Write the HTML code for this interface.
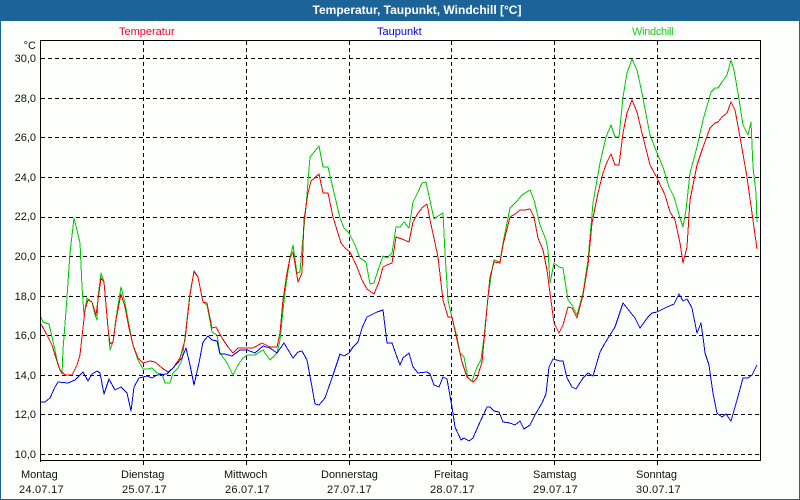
<!DOCTYPE html>
<html>
<head>
<meta charset="utf-8">
<style>
html,body{margin:0;padding:0;background:#fff}
#w{position:relative;width:800px;height:500px;overflow:hidden;background:#fdfffd;font-family:"Liberation Sans",sans-serif;font-size:11px;color:#111}
#w svg{position:absolute;left:0;top:0}
#t{position:absolute;left:0;top:0;width:766px;padding-left:34px;height:21px;background:#1c6497;color:#fff;font-weight:bold;text-align:center;line-height:20px;font-size:12px}
.b{position:absolute;background:#1c6497}
.l{position:absolute;white-space:nowrap;line-height:14px}
.d{letter-spacing:.25px}
.y{position:absolute;right:764px;white-space:nowrap;line-height:14px}
</style>
</head>
<body>
<div id="w">
<svg width="800" height="500" viewBox="0 0 800 500">
<g fill="none" stroke="#000" stroke-width="1" shape-rendering="crispEdges" stroke-dasharray="4 3">
<path d="M41 58.5H760M41 98.5H760M41 137.5H760M41 177.5H760M41 217.5H760M41 256.5H760M41 296.5H760M41 335.5H760M41 375.5H760M41 414.5H760M41 454.5H760"/>
<path d="M143.5 41V466M246.5 41V466M349.5 41V466M451.5 41V466M554.5 41V466M657.5 41V466"/>
</g>
<g fill="none" stroke-width="1" stroke-linejoin="round" shape-rendering="crispEdges">
<polyline stroke="#00c800" points="41,317 43,322 49,324 52,337 55,350 58,365 62,374 63,350 67,297 70,253 74,218 77,230 80,243 82,287 84,315 87,298 92,302 95,315 97,320 98,297 101,273 104,282 108,327 110,350 113,342 116,318 121,287 125,303 129,325 133,345 138,360 143,369 148,369 152,368 157,373 162,374 165,383 170,383 173,373 178,368 182,360 185,337 190,293 194,272 198,277 203,302 207,305 212,332 217,335 220,353 227,363 233,375 238,365 243,358 247,355 255,355 263,350 270,360 277,353 280,340 283,310 286,285 290,258 293,245 297,273 300,272 303,237 306,207 310,157 319,146 323,167 328,167 335,197 340,218 344,228 349,233 355,245 360,258 366,262 370,284 374,283 378,270 383,256 387,258 392,253 396,227 400,227 404,222 409,228 413,202 418,192 422,183 426,182 434,219 438,216 443,213 445,253 448,300 452,318 457,337 460,353 464,357 468,378 472,381 477,367 481,360 484,337 488,297 492,270 494,260 500,262 503,243 510,208 517,201 522,195 530,190 534,200 540,225 546,240 548,250 550,283 554,263 559,267 563,268 568,300 572,305 577,315 583,293 588,260 593,203 600,163 606,137 611,125 615,137 619,137 623,97 627,73 632,59 637,70 642,93 650,135 657,153 663,167 669,187 674,197 680,218 683,227 686,210 690,173 697,147 703,120 711,92 715,88 718,88 722,82 727,75 731,60 734,70 738,93 743,125 748,135 751,122 753,167 756,193 757,222"/>
<polyline stroke="#f00000" points="41,324 47,335 52,345 55,355 60,370 65,375 72,375 77,365 80,355 82,337 85,310 88,300 92,302 96,315 98,300 101,278 104,282 108,328 110,344 113,342 116,320 121,294 125,307 129,328 133,345 138,358 143,363 150,361 155,362 162,368 168,372 173,368 180,358 185,340 190,295 194,271 198,277 203,302 207,303 212,328 216,327 222,338 228,347 233,353 238,348 253,348 262,343 270,347 277,347 280,333 283,300 287,273 290,258 293,252 298,282 302,273 304,220 308,193 311,181 319,174 323,193 328,193 333,217 341,243 345,248 350,252 357,267 362,280 367,289 374,294 379,282 383,267 387,265 392,263 396,237 402,239 409,242 413,222 418,213 423,207 427,204 430,220 435,243 438,257 443,300 448,317 452,317 457,340 462,362 467,377 473,382 477,378 482,362 485,330 488,297 490,277 494,262 500,263 503,245 510,217 515,214 520,210 525,210 530,209 534,217 538,238 543,250 547,270 550,293 554,323 559,333 563,325 568,307 572,308 577,318 583,295 588,265 592,223 598,193 603,173 607,162 611,154 615,165 619,165 623,133 627,113 632,100 637,112 642,133 647,153 650,165 657,178 665,195 670,212 675,220 680,243 683,263 687,247 690,200 697,165 702,150 710,128 715,123 718,122 722,117 727,113 731,102 735,110 740,137 747,177 752,213 757,249"/>
<polyline stroke="#0000f0" points="41,402 45,402 50,398 55,387 58,382 68,383 75,380 83,372 88,381 92,374 97,371 100,373 104,394 109,379 115,390 121,387 127,393 131,411 134,387 139,378 147,376 152,378 157,375 167,374 173,368 182,358 186,348 190,365 194,385 199,363 203,342 208,336 212,340 217,341 220,354 225,354 232,356 240,350 247,350 255,353 263,346 270,348 277,353 284,343 293,358 298,352 302,351 307,360 312,387 315,404 319,405 325,398 333,375 340,354 344,356 349,353 353,347 358,342 362,328 367,317 377,312 383,310 387,343 392,343 397,357 400,365 403,358 409,353 413,367 418,373 427,372 430,374 434,385 439,387 443,377 447,379 452,407 455,427 461,440 464,438 469,441 473,438 480,422 487,407 490,407 494,411 499,412 503,422 510,423 515,425 520,421 524,429 530,425 535,415 542,403 546,394 549,367 553,359 560,361 563,361 567,378 572,387 576,389 583,378 588,373 593,376 600,352 605,343 615,327 623,303 635,318 640,328 648,317 652,313 657,312 667,307 674,304 679,294 683,301 687,299 692,308 697,333 701,323 703,337 705,353 709,365 713,393 717,413 722,417 726,414 731,421 737,400 743,378 748,378 752,375 757,365"/>
</g>
<path d="M40.5 40V462M40 40.5H760.5V460.5H40" fill="none" stroke="#000" shape-rendering="crispEdges"/>
</svg>
<div id="t">Temperatur, Taupunkt, Windchill [°C]</div>
<div class="b" style="left:0;top:21px;width:1px;height:479px"></div>
<div class="b" style="right:0;top:21px;width:1px;height:479px"></div>
<div class="b" style="left:0;bottom:0;width:800px;height:1px"></div>
<div class="l" style="left:119px;top:25px;color:#f00030">Temperatur</div>
<div class="l" style="left:377px;top:25px;color:#0000e0">Taupunkt</div>
<div class="l" style="left:632px;top:25px;color:#20c820;letter-spacing:-.3px">Windchill</div>
<div class="y" style="top:39px">°C</div>
<div class="y" style="top:52px">30,0</div>
<div class="y" style="top:92px">28,0</div>
<div class="y" style="top:131px">26,0</div>
<div class="y" style="top:171px">24,0</div>
<div class="y" style="top:210px">22,0</div>
<div class="y" style="top:250px">20,0</div>
<div class="y" style="top:290px">18,0</div>
<div class="y" style="top:329px">16,0</div>
<div class="y" style="top:369px">14,0</div>
<div class="y" style="top:408px">12,0</div>
<div class="y" style="top:448px">10,0</div>
<div class="l" style="left:21px;top:468px">Montag</div>
<div class="l d" style="left:19px;top:483px">24.07.17</div>
<div class="l" style="left:121px;top:468px">Dienstag</div>
<div class="l d" style="left:122px;top:483px">25.07.17</div>
<div class="l" style="left:224px;top:468px">Mittwoch</div>
<div class="l d" style="left:225px;top:483px">26.07.17</div>
<div class="l" style="left:321px;top:468px">Donnerstag</div>
<div class="l d" style="left:327px;top:483px">27.07.17</div>
<div class="l" style="left:434px;top:468px">Freitag</div>
<div class="l d" style="left:430px;top:483px">28.07.17</div>
<div class="l" style="left:533px;top:468px">Samstag</div>
<div class="l d" style="left:533px;top:483px">29.07.17</div>
<div class="l" style="left:636px;top:468px">Sonntag</div>
<div class="l d" style="left:636px;top:483px">30.07.17</div>
</div>
</body>
</html>
